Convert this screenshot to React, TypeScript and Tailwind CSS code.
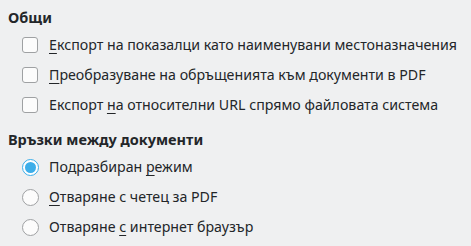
import React from 'react';

type Item = { pre: string; key: string; post: string };

const checks: Item[] = [
  { pre: '', key: 'Е', post: 'кспорт на показалци като наименувани местоназначения' },
  { pre: '', key: 'П', post: 'реобразуване на обръщенията към документи в PDF' },
  { pre: 'Експорт ', key: 'н', post: 'а относителни URL спрямо файловата система' },
];

const radios: Item[] = [
  { pre: 'Подразбиран ', key: 'р', post: 'ежим' },
  { pre: '', key: 'О', post: 'тваряне с четец за PDF' },
  { pre: 'Отваряне ', key: 'с', post: ' интернет браузър' },
];

const Label = ({ item }: { item: Item }) => (
  <span className="text-[14.2px] text-[#232629] whitespace-nowrap">
    {item.pre}
    <span className="underline underline-offset-[3px] decoration-1">{item.key}</span>
    {item.post}
  </span>
);

const CheckBox = () => (
  <span className="w-4 h-4 rounded-[3px] border border-[#9fa1a3] bg-[#fcfcfc] shrink-0" />
);

const Radio = ({ checked }: { checked?: boolean }) =>
  checked ? (
    <span className="w-[17px] h-[17px] rounded-full border-[1.5px] border-[#3daee9] bg-white shrink-0 flex items-center justify-center">
      <span className="w-[11px] h-[11px] rounded-full bg-[#3daee9]" />
    </span>
  ) : (
    <span className="w-[17px] h-[17px] rounded-full border border-[#9fa1a3] bg-[#fcfcfc] shrink-0" />
  );

export default function App() {
  return (
    <div
      className="w-[471px] h-[246px] bg-[#eff0f1] pl-2 pt-[5px] overflow-hidden"
      style={{ fontFamily: '"Noto Sans", sans-serif' }}
    >
      <div className="h-[25px] flex items-center text-[14.5px] font-bold text-[#232629]">Общи</div>
      {checks.map((c) => (
        <div key={c.post} className="h-[30px] flex items-center pl-[14px] gap-[11px]">
          <CheckBox />
          <Label item={c} />
        </div>
      ))}
      <div className="h-[25px] mt-[7px] flex items-center text-[14.5px] font-bold text-[#232629]">
        Връзки между документи
      </div>
      {radios.map((r, i) => (
        <div key={r.post} className="h-[30px] flex items-center pl-[14px] gap-[10px]">
          <Radio checked={i === 0} />
          <Label item={r} />
        </div>
      ))}
    </div>
  );
}
